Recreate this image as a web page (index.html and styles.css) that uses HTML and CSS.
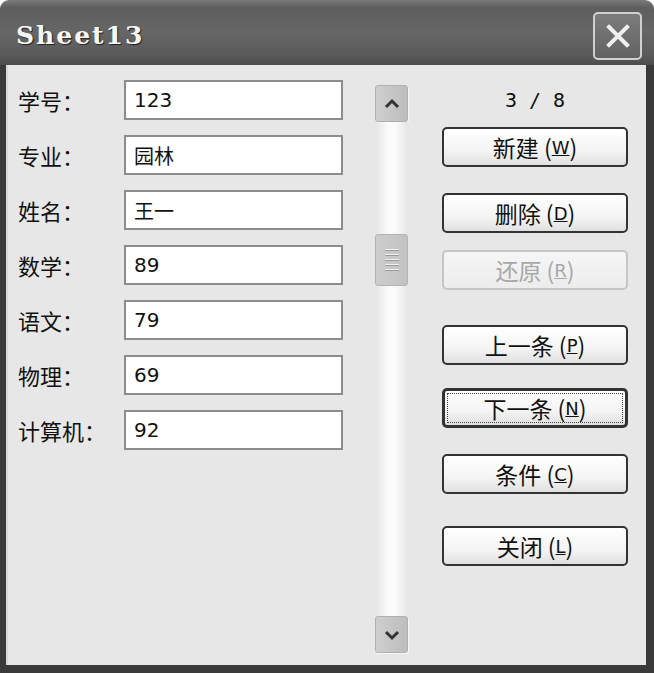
FILE: index.html
```html
<!DOCTYPE html>
<html lang="zh-CN">
<head>
    <meta charset="UTF-8">
    <title>Sheet13</title>
    <link rel="stylesheet" href="styles.css">
</head>
<body>
    <div class="window">
        <div class="titlebar">
            <span class="title">Sheet13</span>
            <button class="close-btn" aria-label="关闭">
                <svg width="30" height="30" viewBox="0 0 30 30">
                    <path d="M6 6 L24 24 M24 6 L6 24" stroke="#f0f0f0" stroke-width="4" stroke-linecap="square"/>
                </svg>
            </button>
        </div>

        <div class="frame">
            <div class="content">
                <form class="fields">
                    <div class="row"><label>学号：</label><input type="text" value="123"></div>
                    <div class="row"><label>专业：</label><input type="text" value="园林"></div>
                    <div class="row"><label>姓名：</label><input type="text" value="王一"></div>
                    <div class="row"><label>数学：</label><input type="text" value="89"></div>
                    <div class="row"><label>语文：</label><input type="text" value="79"></div>
                    <div class="row"><label>物理：</label><input type="text" value="69"></div>
                    <div class="row"><label>计算机：</label><input type="text" value="92"></div>
                </form>

                <div class="scrollbar">
                    <div class="arrow">
                        <svg width="16" height="12" viewBox="0 0 16 12"><path d="M2 9 L8 3 L14 9" fill="none" stroke="#333" stroke-width="3"/></svg>
                    </div>
                    <div class="track">
                        <div class="thumb">
                            <span></span><span></span><span></span><span></span><span></span>
                        </div>
                    </div>
                    <div class="arrow">
                        <svg width="16" height="12" viewBox="0 0 16 12"><path d="M2 3 L8 9 L14 3" fill="none" stroke="#333" stroke-width="3"/></svg>
                    </div>
                </div>

                <div class="actions">
                    <div class="counter">3 / 8</div>
                    <button class="btn b-new">新建 (<u>W</u>)</button>
                    <button class="btn b-del">删除 (<u>D</u>)</button>
                    <button class="btn b-undo" disabled>还原 (<u>R</u>)</button>
                    <button class="btn b-prev">上一条 (<u>P</u>)</button>
                    <button class="btn b-next focused"><span class="focus">下一条 (<u>N</u>)</span></button>
                    <button class="btn b-cond">条件 (<u>C</u>)</button>
                    <button class="btn b-close">关闭 (<u>L</u>)</button>
                </div>
            </div>
        </div>
    </div>
</body>
</html>
```

FILE: styles.css
```css
body {
    margin: 0;
    background-color: #ffffff;
    font-family: "Noto Sans CJK SC", "DejaVu Sans", sans-serif;
}

.window {
    width: 654px;
    height: 673px;
    display: flex;
    flex-direction: column;
}

.titlebar {
    height: 65px;
    box-sizing: border-box;
    display: flex;
    align-items: center;
    justify-content: space-between;
    padding: 6px 12px 0 16px;
    border-radius: 9px 9px 0 0;
    background: linear-gradient(to bottom, #7a7a7a 0%, #5e5e5e 12%, #666666 50%, #5a5a5a 85%, #4c4c4c 100%);
}

.title {
    font-family: "DejaVu Serif", serif;
    font-weight: bold;
    font-size: 25px;
    letter-spacing: 2px;
    color: #f6f6f6;
    text-shadow: 1px 1px 1px #222;
}

.close-btn {
    width: 49px;
    height: 48px;
    padding: 0;
    display: flex;
    align-items: center;
    justify-content: center;
    background: linear-gradient(to bottom, #7c7c7c, #626262);
    border: 2px solid #d0d0d0;
    border-radius: 5px;
}

.frame {
    flex: 1;
    display: flex;
    background-color: #3a3a3a;
    padding: 0 8px 8px 6px;
}

.content {
    flex: 1;
    display: flex;
    background-color: #e7e7e7;
    box-shadow: inset 2px 0 0 #d8d8d8;
}

/* left column: labels + text boxes */
.fields {
    width: 337px;
    padding: 15px 0 0 12px;
    box-sizing: border-box;
    margin: 0;
    display: flex;
    flex-direction: column;
    gap: 15px;
}

.row {
    display: flex;
    align-items: center;
    height: 40px;
}

.row label {
    width: 106px;
    font-size: 22px;
    color: #111;
    white-space: nowrap;
}

.row input {
    width: 219px;
    height: 40px;
    box-sizing: border-box;
    border: 2px solid #8c8c8c;
    background-color: #ffffff;
    padding: 0 8px;
    font-family: "DejaVu Sans", "Noto Sans CJK SC", sans-serif;
    font-size: 20px;
    color: #111;
}

/* scrollbar */
.scrollbar {
    width: 33px;
    margin: 20px 0 12px 32px;
    display: flex;
    flex-direction: column;
}

.arrow {
    height: 35px;
    display: flex;
    align-items: center;
    justify-content: center;
    background: linear-gradient(to right, #cfcfcf, #bdbdbd);
    border: 1px solid #b0b0b0;
    border-radius: 3px;
    box-shadow: 1px 1px 0 #f7f7f7;
}

.track {
    flex: 1;
    background: linear-gradient(to right, #e4e4e4, #fbfbfb 40%, #fbfbfb 60%, #e6e6e6);
    padding-top: 112px;
}

.thumb {
    height: 52px;
    box-sizing: border-box;
    background: linear-gradient(to right, #cdcdcd, #c2c2c2);
    border: 1px solid #b4b4b4;
    border-radius: 3px;
    display: flex;
    flex-direction: column;
    align-items: center;
    justify-content: center;
    gap: 3px;
}

.thumb span {
    width: 14px;
    height: 1px;
    background-color: #f2f2f2;
    border-bottom: 1px solid #9a9a9a;
}

/* right column: counter + buttons */
.actions {
    width: 186px;
    margin: 20px 0 0 34px;
    display: flex;
    flex-direction: column;
}

.counter {
    height: 30px;
    line-height: 30px;
    text-align: center;
    font-family: "DejaVu Sans Mono", monospace;
    font-size: 20px;
    color: #111;
}

.btn {
    height: 40px;
    box-sizing: border-box;
    padding: 0;
    border: 2px solid #333;
    border-radius: 5px;
    background: linear-gradient(to bottom, #ffffff 0%, #f4f4f4 60%, #e0e0e0 100%);
    font-family: "Noto Sans CJK SC", sans-serif;
    font-size: 23px;
    color: #111;
    display: flex;
    align-items: center;
    justify-content: center;
}

.btn u {
    font-family: "DejaVu Sans", sans-serif;
    font-size: 18px;
}

.btn:disabled {
    color: #a8a8a8;
    border-color: #c6c6c6;
    background: linear-gradient(to bottom, #f6f6f6, #ececec);
}

.b-new { margin-top: 12px; }
.b-del { margin-top: 26px; }
.b-undo { margin-top: 17px; }
.b-prev { margin-top: 35px; }
.b-next { margin-top: 23px; }
.b-cond { margin-top: 26px; }
.b-close { margin-top: 32px; }

.focused {
    border: 3px solid #333;
    padding: 2px;
}

.focus {
    flex: 1;
    align-self: stretch;
    display: flex;
    align-items: center;
    justify-content: center;
    border: 1px dotted #444;
}
```
